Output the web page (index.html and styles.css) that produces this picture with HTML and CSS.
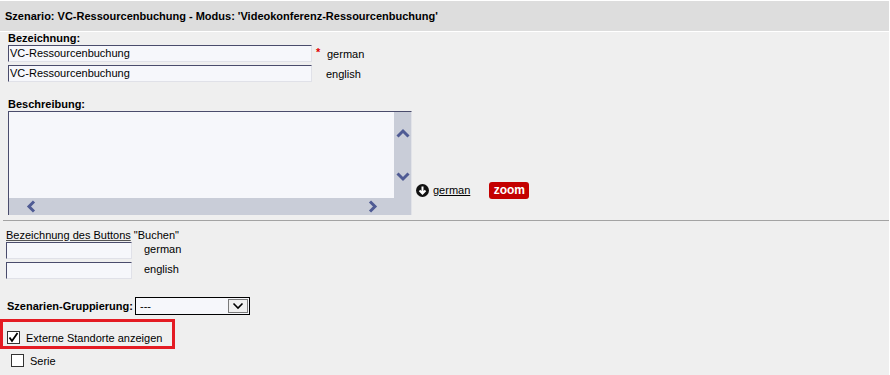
FILE: index.html
```html
<!DOCTYPE html>
<html>
<head>
<meta charset="utf-8">
<link rel="stylesheet" href="styles.css">
</head>
<body>
<div class="page">
  <div class="header">Szenario: VC-Ressourcenbuchung - Modus: 'Videokonferenz-Ressourcenbuchung'</div>
  <div class="content">
    <div class="sec1">
      <div class="lbl b">Bezeichnung:</div>
      <div class="row">
        <div class="inp wide">VC-Ressourcenbuchung</div>
        <span class="req">*</span><span>german</span>
      </div>
      <div class="row r2">
        <div class="inp wide">VC-Ressourcenbuchung</div>
        <span class="en">english</span>
      </div>
      <div class="lbl b desc-lbl">Beschreibung:</div>
      <div class="desc-row">
        <div class="ta">
          <div class="ta-text"></div>
          <div class="vscroll">
            <svg width="14" height="10" viewBox="0 0 14 10"><polyline points="1.5,8.5 7,3 12.5,8.5" fill="none" stroke="#4f5b94" stroke-width="3"/></svg>
            <svg width="14" height="10" viewBox="0 0 14 10"><polyline points="1.5,1.5 7,7 12.5,1.5" fill="none" stroke="#4f5b94" stroke-width="3"/></svg>
          </div>
          <div class="hscroll">
            <svg width="10" height="13" viewBox="0 0 10 13"><polyline points="8,1.5 3,6.5 8,11.5" fill="none" stroke="#4f5b94" stroke-width="3"/></svg>
            <svg width="10" height="13" viewBox="0 0 10 13"><polyline points="2,1.5 7,6.5 2,11.5" fill="none" stroke="#4f5b94" stroke-width="3"/></svg>
          </div>
          <div class="corner"></div>
        </div>
        <a class="langlink" href="#">
          <svg width="13" height="13" viewBox="0 0 13 13"><circle cx="6.5" cy="6.5" r="6.5" fill="#111"/><path d="M6.5 2.5 V9.5 M3.5 6.5 L6.5 9.5 L9.5 6.5" fill="none" stroke="#fff" stroke-width="2"/></svg>
          <span>german</span>
        </a>
        <span class="zoom">zoom</span>
      </div>
    </div>
    <div class="sep"></div>
    <div class="sec2">
      <div class="lbl2"><span class="ul">Bezeichnung des Buttons</span> "Buchen"</div>
      <div class="row">
        <div class="inp short"></div>
        <span class="lang2">german</span>
      </div>
      <div class="row r2">
        <div class="inp short"></div>
        <span class="lang2">english</span>
      </div>
      <div class="grp">
        <span class="b grp-lbl">Szenarien-Gruppierung:</span>
        <div class="sel">
          <span>---</span>
          <span class="selbtn"><svg width="12" height="8" viewBox="0 0 12 8"><polyline points="1.5,1.5 6,6 10.5,1.5" fill="none" stroke="#000" stroke-width="1.6"/></svg></span>
        </div>
      </div>
      <div class="hilite">
        <span class="cb"><svg width="11" height="11" viewBox="0 0 11 11"><polyline points="1.5,5.5 4,9 9.5,1" fill="none" stroke="#000" stroke-width="1.8"/></svg></span>
        <span class="nw">Externe Standorte anzeigen</span>
      </div>
      <div class="serie">
        <span class="cb"></span>
        <span>Serie</span>
      </div>
    </div>
  </div>
</div>
</body>
</html>
```
FILE: styles.css
```css
html, body {
  margin: 0;
  background: #fff;
}
.page {
  width: 889px;
  padding-top: 1px;
  font-family: "Liberation Sans", Arial, sans-serif;
  font-size: 11px;
  color: #000;
}
.b { font-weight: bold; }
.nw { white-space: nowrap; }
.header {
  height: 30px;
  line-height: 30px;
  background: #dddddd;
  font-weight: bold;
  padding-left: 5px;
  border-bottom: 1px solid #fff;
}
.content {
  background: #efefef;
  height: 343px;
}
.sec1 { padding-left: 8px; }
.lbl { line-height: 13px; }
.row {
  display: flex;
  align-items: center;
  height: 17px;
}
.r2 { margin-top: 3px; }
.inp {
  box-sizing: border-box;
  height: 17px;
  border: 1px solid;
  border-color: #4a4c6c #e0e1e8 #e0e1e8 #4a4c6c;
  background: #f6f7fb;
  padding-left: 1px;
  line-height: 15px;
  white-space: nowrap;
}
.wide { width: 304px; }
.short { width: 126px; }
.req {
  color: #e00000;
  font-weight: bold;
  width: 11px;
  margin-left: 4px;
  position: relative;
  top: -2px;
}
.en { margin-left: 14px; }
.desc-lbl { margin-top: 15px; line-height: 14px; }
.desc-row {
  display: flex;
  align-items: flex-end;
}
.ta {
  box-sizing: border-box;
  width: 404px;
  height: 104px;
  border-top: 1px solid #4a4c6c;
  border-left: 1px solid #4a4c6c;
  border-right: 1px solid #e2e3e8;
  display: grid;
  grid-template-columns: 1fr 17px;
  grid-template-rows: 1fr 17px;
}
.ta-text { background: #f6f7fb; }
.vscroll {
  background: #c9cdd8;
  display: flex;
  flex-direction: column;
  justify-content: space-between;
  align-items: center;
  padding: 16px 0 16px;
}
.hscroll {
  background: #c9cdd8;
  display: flex;
  justify-content: space-between;
  align-items: center;
  padding: 0 16px 0 17px;
}
.corner { background: #c9cdd8; }
.langlink {
  display: flex;
  align-items: center;
  gap: 4px;
  margin-left: 4px;
  margin-bottom: 18px;
  color: #000;
  text-decoration: underline;
  line-height: 13px;
}
.langlink svg { display: block; }
.zoom {
  box-sizing: border-box;
  width: 40px;
  height: 17px;
  margin-left: 19px;
  margin-bottom: 16px;
  background: #c40000;
  color: #fff;
  font-weight: bold;
  font-size: 12px;
  text-align: center;
  line-height: 17px;
  border-radius: 3px;
}
.sep {
  margin: 5px 0 0 3px;
  height: 1px;
  background: #a3a3a3;
}
.sec2 { padding-left: 6px; }
.lbl2 { margin-top: 8px; line-height: 13px; }
.ul { text-decoration: underline; text-decoration-color: #555; }
.lang2 { margin-left: 12px; margin-bottom: 4px; }
.grp {
  display: flex;
  align-items: center;
  margin-top: 18px;
  height: 18px;
}
.grp-lbl {
  width: 128px;
  padding-left: 1px;
  white-space: nowrap;
}
.sel {
  box-sizing: border-box;
  width: 115px;
  height: 18px;
  border: 1px solid #000;
  background: #f6f7fb;
  display: flex;
  align-items: center;
  justify-content: space-between;
  padding-left: 4px;
}
.selbtn {
  box-sizing: border-box;
  width: 20px;
  height: 14px;
  margin-right: 1px;
  border: 1px solid #7a7a7a;
  background: #f0f0f0;
  display: flex;
  align-items: center;
  justify-content: center;
}
.hilite {
  box-sizing: border-box;
  width: 175px;
  height: 30px;
  margin: 4px 0 0 -6px;
  border: 3px solid #e41b23;
  display: flex;
  align-items: center;
  gap: 6px;
  padding: 7px 0 0 4px;
}
.cb {
  box-sizing: border-box;
  width: 13px;
  height: 13px;
  border: 1px solid #333;
  background: #fff;
  display: flex;
  align-items: center;
  justify-content: center;
  flex: none;
}
.serie {
  display: flex;
  align-items: center;
  gap: 6px;
  margin-top: 5px;
  padding-left: 5px;
  height: 13px;
}
```
